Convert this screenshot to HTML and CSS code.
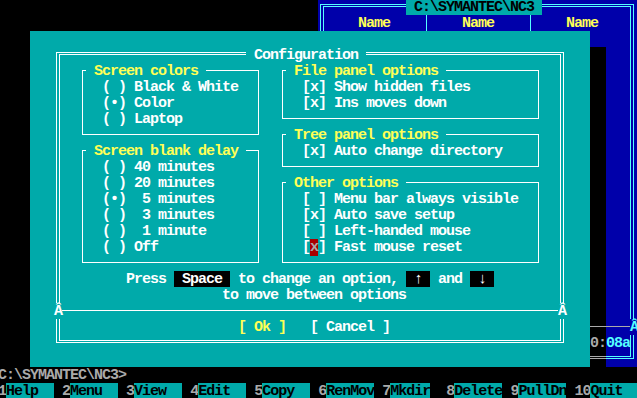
FILE: index.html
```html
<!DOCTYPE html>
<html lang="en">
<head>
    <meta charset="UTF-8">
    <title>Norton Commander - Configuration</title>
    <link rel="stylesheet" href="styles.css">
</head>
<body>
    <div class="screen">
        <div class="panel">
            <div class="row panel-title"><span class="path"> C:\SYMANTEC\NC3 </span></div>
            <div class="files">
                <div class="file-col"><div class="row col-head">Name</div></div>
                <div class="col-sep"></div>
                <div class="file-col"><div class="row col-head">Name</div></div>
                <div class="col-sep"></div>
                <div class="file-col"><div class="row col-head">Name</div></div>
            </div>
            <div class="row panel-sep"><span class="joint">Â</span></div>
            <div class="row panel-info">08a</div>
        </div>

        <div class="dialog">
            <div class="frame">
                <div class="row frame-title"><span class="caption"> Configuration </span></div>
                <div class="groups">
                    <div class="group-col narrow">
                        <div class="group">
                            <div class="row group-title"><span class="legend"> Screen colors </span></div>
                            <div class="row opt">( ) Black &amp; White</div>
                            <div class="row opt">(•) Color</div>
                            <div class="row opt">( ) Laptop</div>
                        </div>
                        <div class="group">
                            <div class="row group-title"><span class="legend"> Screen blank delay </span></div>
                            <div class="row opt">( ) 40 minutes</div>
                            <div class="row opt">( ) 20 minutes</div>
                            <div class="row opt">(•)  5 minutes</div>
                            <div class="row opt">( )  3 minutes</div>
                            <div class="row opt">( )  1 minute</div>
                            <div class="row opt">( ) Off</div>
                        </div>
                    </div>
                    <div class="group-col wide">
                        <div class="group">
                            <div class="row group-title"><span class="legend"> File panel options </span></div>
                            <div class="row opt">[x] Show hidden files</div>
                            <div class="row opt">[x] Ins moves down</div>
                        </div>
                        <div class="group">
                            <div class="row group-title"><span class="legend"> Tree panel options </span></div>
                            <div class="row opt">[x] Auto change directory</div>
                        </div>
                        <div class="group">
                            <div class="row group-title"><span class="legend"> Other options </span></div>
                            <div class="row opt">[ ] Menu bar always visible</div>
                            <div class="row opt">[x] Auto save setup</div>
                            <div class="row opt">[ ] Left-handed mouse</div>
                            <div class="row opt">[<span class="cursor">x</span>] Fast mouse reset</div>
                        </div>
                    </div>
                </div>
                <div class="row hint hint-first">Press <span class="key"> Space </span> to change an option, <span class="key"> ↑ </span> and <span class="key"> ↓ </span></div>
                <div class="row hint hint-second">to move between options</div>
                <div class="row divider"><span class="joint">Â</span><span class="joint">Â</span></div>
                <div class="row buttons"><span class="btn-focus">[ Ok ]</span><span class="btn-gap">   </span><span>[ Cancel ]</span></div>
            </div>
        </div>

        <div class="shadow">
            <div class="row shadow-line"></div>
            <div class="row">0:</div>
            <div class="row shadow-edge"></div>
        </div>

        <div class="row cmdline">C:\SYMANTEC\NC3&gt;</div>
        <div class="row keybar"><span class="fn">1</span><span class="fn-label">Help  </span> <span class="fn">2</span><span class="fn-label">Menu  </span> <span class="fn">3</span><span class="fn-label">View  </span> <span class="fn">4</span><span class="fn-label">Edit  </span> <span class="fn">5</span><span class="fn-label">Copy  </span> <span class="fn">6</span><span class="fn-label">RenMov</span> <span class="fn">7</span><span class="fn-label">Mkdir</span>  <span class="fn">8</span><span class="fn-label">Delete</span> <span class="fn">9</span><span class="fn-label">PullDn</span> <span class="fn">10</span><span class="fn-label">Quit  </span></div>
    </div>
</body>
</html>
```

FILE: styles.css
```css
html, body {
    margin: 0;
    background: #000;
    overflow: hidden;
}
/* 80x25 text mode, 8x16 cells */
.screen {
    display: grid;
    grid-template-columns: repeat(80, 8px);
    grid-template-rows: repeat(25, 16px);
    width: 640px;
    height: 400px;
    margin: -1px 0 0 -2px;
    background: #000;
    color: #fff;
    font-family: "Liberation Mono", "DejaVu Sans Mono", monospace;
    font-size: 15px;
    font-weight: bold;
    line-height: 17px;
    letter-spacing: -1px;
    overflow: hidden;
}
.row {
    height: 16px;
    white-space: pre;
}

/* right file panel behind the dialog */
.panel {
    grid-column: 41 / 81;
    grid-row: 1 / 24;
    position: relative;
    isolation: isolate;
    background: #0000aa;
}
.panel::before,
.panel::after {
    content: '';
    position: absolute;
    border: 1px solid #55ffff;
    z-index: -1;
}
.panel::before {
    top: 5px;
    left: 2px;
    right: 4px;
    bottom: 8px;
}
.panel::after {
    top: 7px;
    left: 5px;
    right: 7px;
    bottom: 10px;
}
.panel-title {
    padding-left: 88px;
}
.path {
    display: inline-block;
    height: 16px;
    vertical-align: top;
    background: #00aaaa;
    color: #000;
}
.files {
    display: flex;
    height: 304px;
    padding-left: 8px;
}
.file-col {
    width: 96px;
}
.col-head {
    text-align: center;
    color: #ffff55;
}
.col-sep {
    width: 8px;
    background: linear-gradient(#55ffff, #55ffff) 4px 0 / 1px 100% no-repeat;
}
.panel-sep {
    display: flex;
    justify-content: flex-end;
    background: linear-gradient(#aaa, #aaa) 0 7px / 100% 1px no-repeat;
}
.panel-sep .joint {
    width: 8px;
    background: #0000aa;
    color: #55ffff;
}
.panel-info {
    padding-left: 288px;
    color: #55ffff;
}

/* configuration dialog */
.dialog {
    grid-column: 5 / 75;
    grid-row: 3 / 24;
    isolation: isolate;
    background: #00aaaa;
}
.frame {
    position: relative;
    margin: 16px 24px;
    padding-bottom: 16px;
}
.frame::before,
.frame::after {
    content: '';
    position: absolute;
    border: 1px solid #fff;
    z-index: -1;
}
.frame::before {
    top: 5px;
    left: 2px;
    right: 2px;
    bottom: 8px;
}
.frame::after {
    top: 7px;
    left: 5px;
    right: 5px;
    bottom: 10px;
}
.frame-title {
    padding-left: 192px;
}
.caption,
.legend,
.key {
    display: inline-block;
    height: 16px;
    vertical-align: top;
}
.caption,
.legend {
    background: #00aaaa;
}
.groups {
    display: flex;
    gap: 16px;
    padding-left: 24px;
}
.narrow {
    width: 184px;
}
.wide {
    width: 264px;
}
.group {
    position: relative;
    padding-bottom: 16px;
}
.group::before {
    content: '';
    position: absolute;
    top: 7px;
    left: 4px;
    right: 3px;
    bottom: 8px;
    border: 1px solid #fff;
    z-index: -1;
}
.group-title {
    padding-left: 8px;
    color: #ffff55;
}
.opt {
    padding-left: 24px;
}
.cursor {
    background: #aa0000;
    color: #aaa;
}
.hint-first {
    padding-left: 72px;
}
.hint-second {
    padding-left: 168px;
}
.key {
    background: #000;
    color: #fff;
}
.divider {
    display: flex;
    justify-content: space-between;
    background: linear-gradient(#fff, #fff) 0 7px / 100% 1px no-repeat;
}
.divider .joint {
    width: 8px;
    background: #00aaaa;
}
.buttons {
    padding-left: 184px;
}
.btn-focus {
    color: #ffff55;
}
.btn-gap {
    display: inline-block;
    width: 24px;
}

/* dialog shadow over the panel */
.shadow {
    grid-column: 75 / 77;
    grid-row: 4 / 24;
    isolation: isolate;
    display: flex;
    flex-direction: column;
    justify-content: flex-end;
    background: #000;
    color: #aaa;
}
.shadow-line {
    background: linear-gradient(#aaa, #aaa) 0 7px / 100% 1px no-repeat;
}
.shadow-edge {
    background:
        linear-gradient(#aaa, #aaa) 0 5px / 100% 1px no-repeat,
        linear-gradient(#aaa, #aaa) 0 7px / 100% 1px no-repeat;
}

/* command line and key bar */
.cmdline {
    grid-column: 1 / 81;
    grid-row: 24;
    color: #aaa;
}
.keybar {
    grid-column: 1 / 81;
    grid-row: 25;
}
.fn {
    color: #aaa;
}
.fn-label {
    display: inline-block;
    height: 16px;
    vertical-align: top;
    background: #00aaaa;
    color: #000;
}
```
